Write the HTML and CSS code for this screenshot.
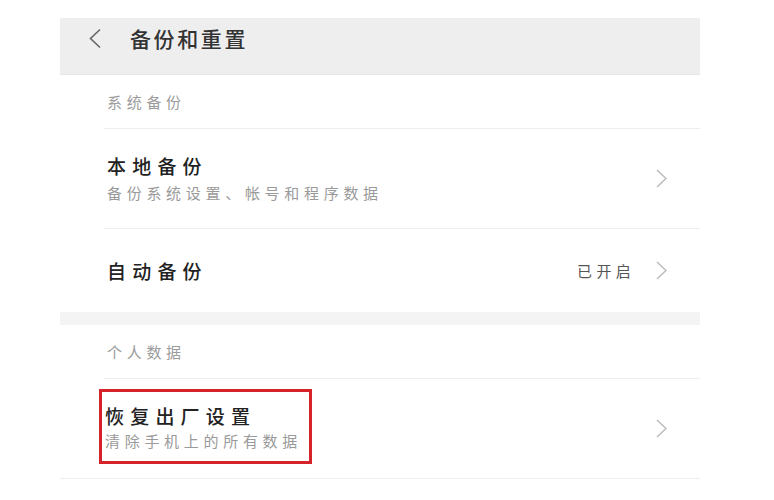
FILE: index.html
```html
<!DOCTYPE html>
<html lang="zh-CN">
<head>
<meta charset="utf-8">
<title>备份和重置</title>
<link rel="stylesheet" href="styles.css">
</head>
<body>
<div class="screen">
  <header class="topbar">
    <svg class="back" width="14" height="21" viewBox="0 0 14 21"><path d="M12 1.5 L2.5 10.5 L12 19.5" fill="none" stroke="#666" stroke-width="1.6"/></svg>
    <h1 class="title">备份和重置</h1>
  </header>

  <section class="group">
    <div class="label">系统备份</div>
    <div class="row tall">
      <div class="text">
        <div class="name">本地备份</div>
        <div class="desc">备份系统设置、帐号和程序数据</div>
      </div>
      <svg class="chev" width="11" height="19" viewBox="0 0 11 19"><path d="M1 1 L10 9.5 L1 18" fill="none" stroke="#bbb" stroke-width="1.5"/></svg>
    </div>
    <div class="row short last">
      <div class="text">
        <div class="name">自动备份</div>
      </div>
      <span class="value">已开启</span>
      <svg class="chev" width="11" height="19" viewBox="0 0 11 19"><path d="M1 1 L10 9.5 L1 18" fill="none" stroke="#bbb" stroke-width="1.5"/></svg>
    </div>
  </section>

  <div class="band"></div>

  <section class="group closed">
    <div class="label">个人数据</div>
    <div class="row marked last">
      <div class="text mark">
        <div class="name">恢复出厂设置</div>
        <div class="desc">清除手机上的所有数据</div>
      </div>
      <svg class="chev" width="11" height="19" viewBox="0 0 11 19"><path d="M1 1 L10 9.5 L1 18" fill="none" stroke="#bbb" stroke-width="1.5"/></svg>
    </div>
  </section>
</div>
</body>
</html>
```

FILE: styles.css
```css
* { box-sizing: border-box; }
html, body { margin: 0; padding: 0; background: #fff; }
body {
  font-family: "Noto Sans CJK SC", "Noto Sans", sans-serif;
}
.screen {
  width: 640px;
  margin: 18px 0 0 60px;
  background: #fff;
}
.topbar {
  height: 57px;
  background: #eeeeee;
  border-bottom: 1px solid #e6e6e6;
  display: flex;
  align-items: flex-start;
  padding: 6px 0 0 28px;
}
.back { display: block; margin-top: 4px; }
.title {
  margin: 0 0 0 28px;
  font-size: 21px;
  font-weight: 500;
  line-height: 28px;
  letter-spacing: 2.6px;
  color: #333;
}
.group { background: #fff; }
.group.closed { border-bottom: 1px solid #eeeeee; }
.label {
  margin-left: 44px;
  padding-left: 3px;
  height: 54px;
  display: flex;
  align-items: center;
  border-bottom: 1px solid #eeeeee;
  font-size: 15px;
  letter-spacing: 4.7px;
  color: #9c9c9c;
}
.row {
  margin-left: 44px;
  padding: 0 33px 0 3px;
  display: flex;
  align-items: center;
  border-bottom: 1px solid #eeeeee;
}
.row.last { border-bottom: none; }
.row.tall { height: 100px; }
.row.short { height: 83px; }
.row.marked { height: 99px; padding-top: 10px; padding-bottom: 14px; align-items: stretch; }
.row.marked .chev { align-self: center; margin-top: 4px; margin-left: auto; }
.text {
  flex: 1;
  display: flex;
  flex-direction: column;
  gap: 3px;
}
.name {
  font-size: 19px;
  line-height: 26px;
  font-weight: 500;
  letter-spacing: 6.2px;
  color: #222;
}
.desc {
  font-size: 15px;
  line-height: 22px;
  letter-spacing: 4.7px;
  color: #9a9a9a;
}
.mark {
  flex: 0 0 213px;
  margin-left: -8px;
  border: 3px solid #d6232b;
  padding: 11px 6px 7px 3px;
  gap: 1px;
}
.value {
  font-size: 15px;
  letter-spacing: 4.3px;
  color: #555;
  margin-right: 21px;
}
.chev { display: block; flex: none; }
.band {
  height: 13px;
  background: #f4f4f4;
}
```
